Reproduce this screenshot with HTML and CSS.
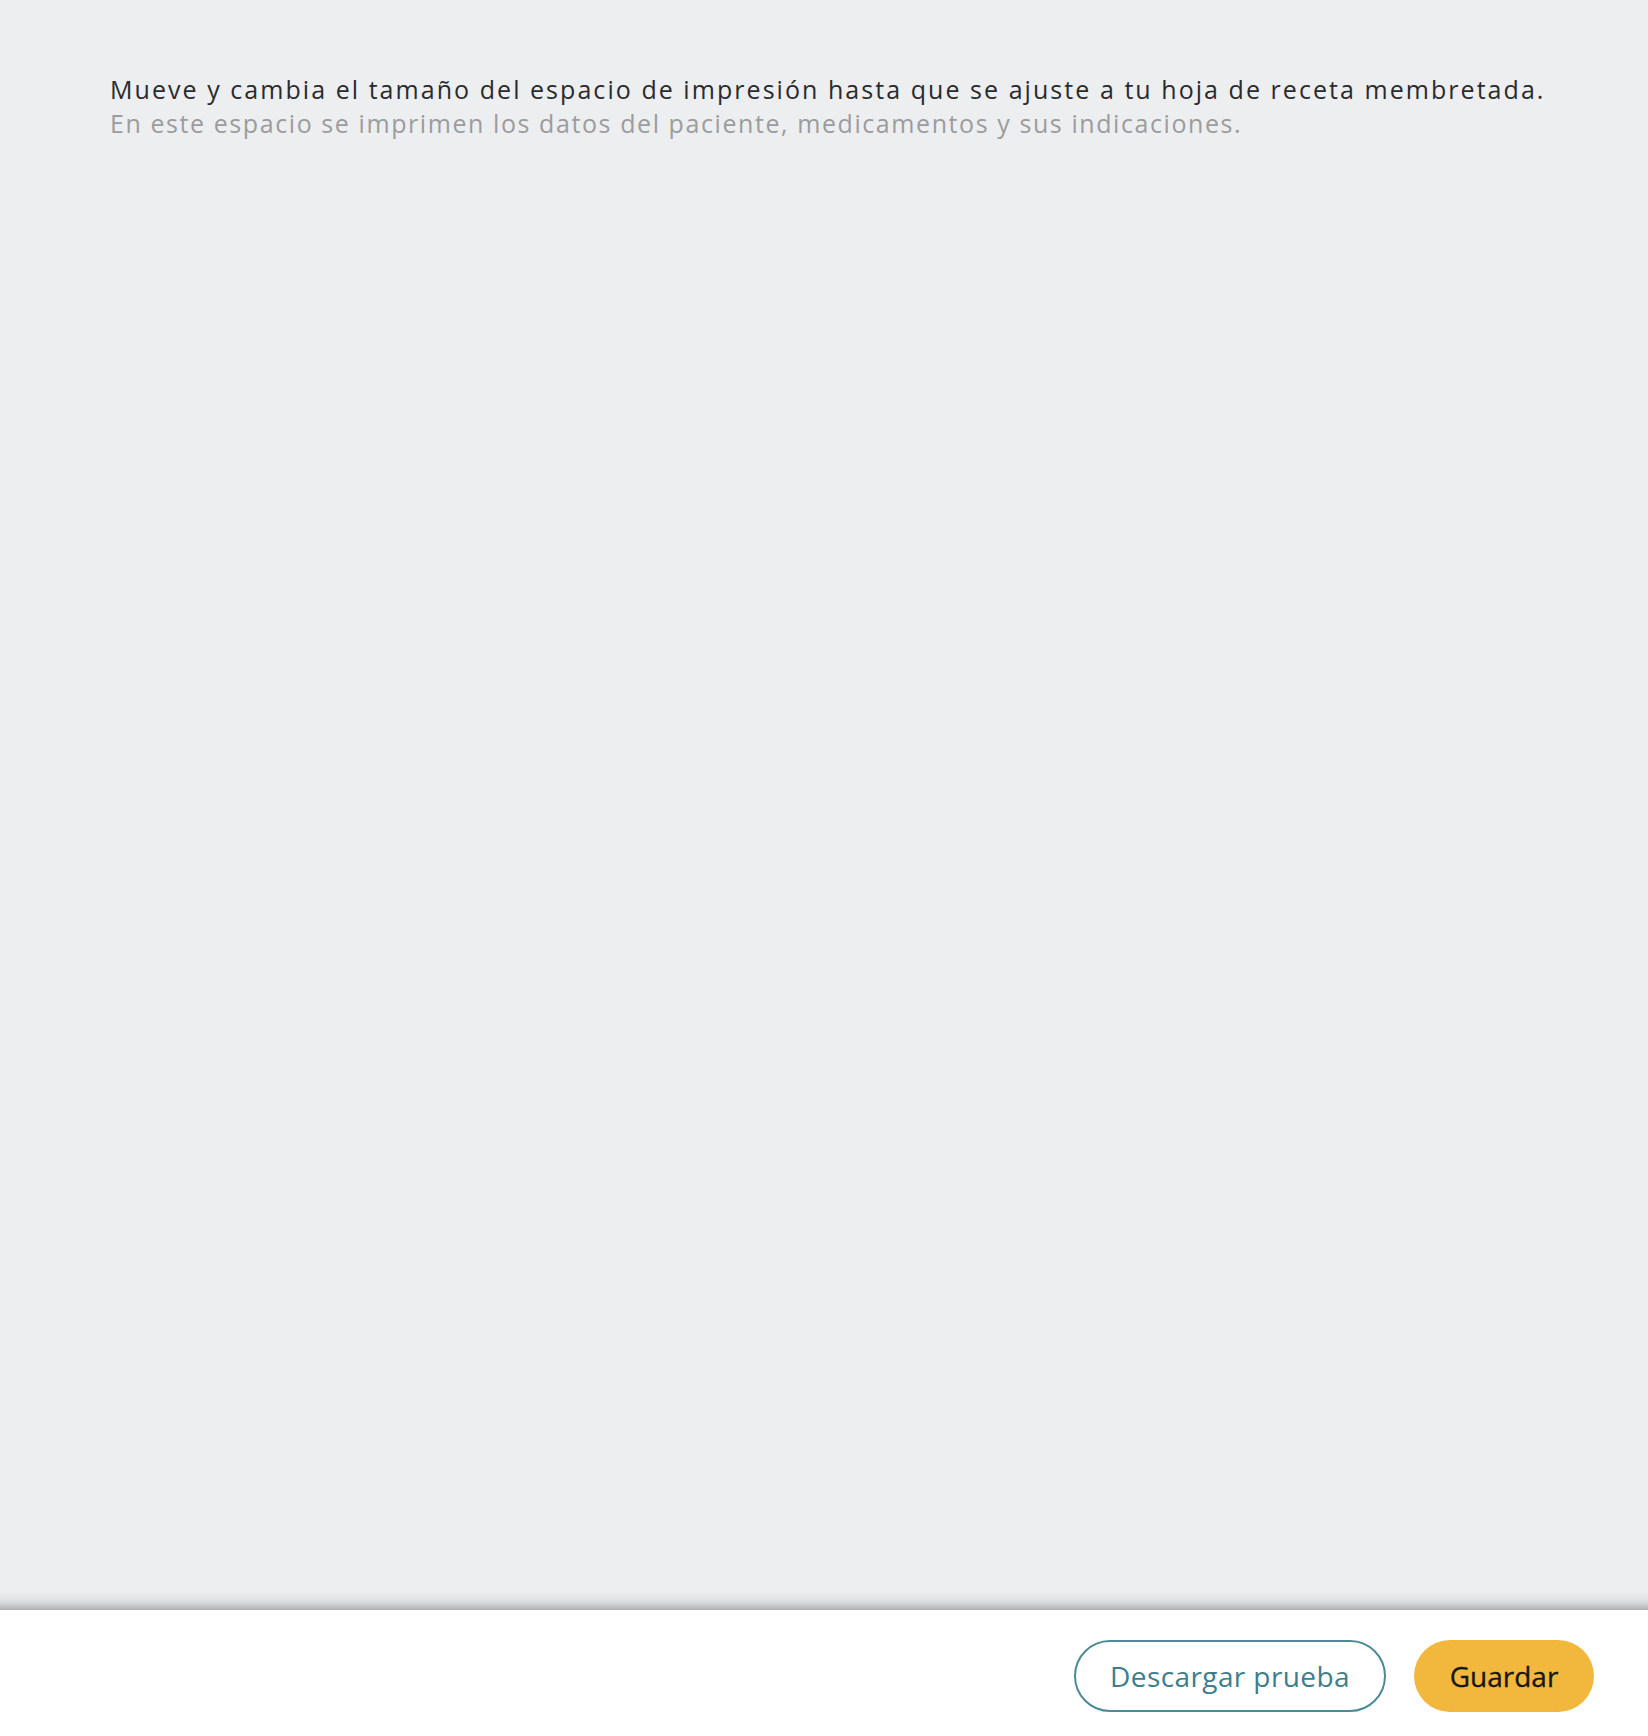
FILE: index.html
```html
<!DOCTYPE html>
<html lang="es">
<head>
<meta charset="utf-8">
<title>Espacio de impresión</title>
<link rel="stylesheet" href="styles.css">
</head>
<body>
<div class="page">
  <main class="canvas">
    <div class="intro">
      <p class="intro-title">Mueve y cambia el tamaño del espacio de impresión hasta que se ajuste a tu hoja de receta membretada.</p>
      <p class="intro-sub">En este espacio se imprimen los datos del paciente, medicamentos y sus indicaciones.</p>
    </div>
  </main>
  <footer class="footer">
    <button class="btn btn-outline" type="button">Descargar prueba</button>
    <button class="btn btn-primary" type="button">Guardar</button>
  </footer>
</div>
</body>
</html>
```

FILE: styles.css
```css
* { box-sizing: border-box; }
html, body { margin: 0; padding: 0; height: 100%; }
body {
  font-family: "Open Sans", Lato, "Liberation Sans", sans-serif;
  background: #edeef0;
}
.page {
  display: flex;
  flex-direction: column;
  height: 1736px;
}
.canvas {
  flex: 1;
  background: #edeef0;
  padding: 72px 110px 0;
}
.intro p {
  margin: 0;
  font-size: 25px;
  line-height: 34px;
  white-space: nowrap;
}
.intro-title { color: #2a2b2d; letter-spacing: 2.05px; }
.intro-sub { color: #9b9c9e; letter-spacing: 1.58px; }
.footer {
  height: 126px;
  background: #ffffff;
  position: relative;
  display: flex;
  justify-content: flex-end;
  align-items: center;
  gap: 28px;
  padding: 6px 54px 0 0;
}
.footer::before {
  content: "";
  position: absolute;
  left: 0; right: 0; top: -20px; height: 20px;
  background: linear-gradient(to bottom, rgba(0,0,0,0) 0%, rgba(0,0,0,0.04) 45%, rgba(0,0,0,0.12) 70%, rgba(0,0,0,0.26) 100%);
}
.btn {
  height: 72px;
  border-radius: 36px;
  font-family: "Open Sans", Lato, "Liberation Sans", sans-serif;
  font-size: 28px;
  cursor: pointer;
  padding: 0;
}
.btn-outline {
  width: 312px;
  background: #ffffff;
  border: 2px solid #4b8a96;
  color: #3c7e8b;
  letter-spacing: 0.4px;
}
.btn-primary {
  width: 180px;
  background: #f2b73d;
  border: none;
  color: #161616;
  font-weight: 500;
  -webkit-text-stroke: 0.3px #161616;
}
```
